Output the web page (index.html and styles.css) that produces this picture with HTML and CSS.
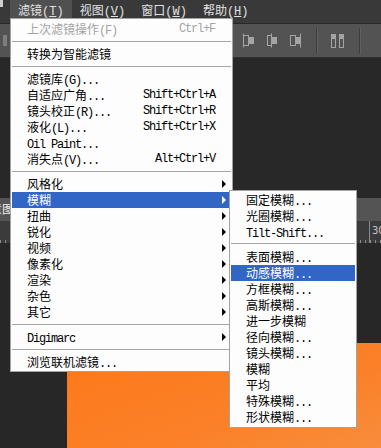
FILE: index.html
```html
<!DOCTYPE html>
<html lang="zh-CN">

<head>
    <meta charset="UTF-8">
    <title>滤镜菜单</title>
    <link rel="stylesheet" href="styles.css">
</head>

<body>
    <div class="app">
        <div class="menubar">
            <span class="ps-logo"></span>
            <span class="mb-item active">滤镜<span class="m">(<u>T</u>)</span></span>
            <span class="mb-item">视图<span class="m">(<u>V</u>)</span></span>
            <span class="mb-item">窗口<span class="m">(<u>W</u>)</span></span>
            <span class="mb-item">帮助<span class="m">(<u>H</u>)</span></span>
        </div>

        <div class="toolbar">
            <span class="grip"></span>
            <div class="tool-group">
                <svg class="tool" width="14" height="15" viewBox="0 0 14 15">
                    <path d="M1.5 0.5v14" stroke="#a4a4a4" />
                    <rect x="1.5" y="2.5" width="5" height="10" fill="none" stroke="#a4a4a4" />
                    <rect x="7" y="4" width="5" height="7" fill="#a4a4a4" />
                </svg>
                <svg class="tool" width="14" height="15" viewBox="0 0 14 15">
                    <path d="M6.5 0.5v14" stroke="#a4a4a4" />
                    <rect x="2.5" y="2.5" width="4" height="10" fill="none" stroke="#a4a4a4" />
                    <rect x="7" y="4" width="5" height="7" fill="#a4a4a4" />
                </svg>
                <svg class="tool" width="14" height="15" viewBox="0 0 14 15">
                    <path d="M12.5 0.5v14" stroke="#a4a4a4" />
                    <rect x="2.5" y="2.5" width="5" height="10" fill="none" stroke="#a4a4a4" />
                    <rect x="8" y="4" width="4" height="7" fill="#a4a4a4" />
                </svg>
            </div>
            <span class="tool-sep"></span>
            <svg class="tool" width="15" height="15" viewBox="0 0 15 15">
                <rect x="1" y="1" width="5" height="4" fill="#a4a4a4" />
                <rect x="9" y="1" width="5" height="4" fill="#a4a4a4" />
                <rect x="1.5" y="5.5" width="4" height="9" fill="none" stroke="#a4a4a4" />
                <rect x="9.5" y="5.5" width="4" height="9" fill="none" stroke="#a4a4a4" />
            </svg>
            <span class="tool-sep"></span>
        </div>

        <div class="panel-space"></div>

        <div class="document">
            <div class="tabbar">
                <span class="tab">示意图</span>
            </div>
            <div class="ruler">
                <span class="ruler-num">30</span>
            </div>
            <div class="stage">
                <div class="canvas"></div>
            </div>
        </div>

        <!-- 主菜单：滤镜 -->
        <div class="menu menu-main">
            <div class="item disabled"><span class="label">上次滤镜操作<span class="m">(F)</span></span><span class="key">Ctrl+F</span><span class="arrow"></span></div>
            <div class="sep"></div>
            <div class="item"><span class="label">转换为智能滤镜</span><span class="arrow"></span></div>
            <div class="sep"></div>
            <div class="item"><span class="label">滤镜库<span class="m">(G)...</span></span><span class="arrow"></span></div>
            <div class="item"><span class="label">自适应广角<span class="m">...</span></span><span class="key">Shift+Ctrl+A</span><span class="arrow"></span></div>
            <div class="item"><span class="label">镜头校正<span class="m">(R)...</span></span><span class="key">Shift+Ctrl+R</span><span class="arrow"></span></div>
            <div class="item"><span class="label">液化<span class="m">(L)...</span></span><span class="key">Shift+Ctrl+X</span><span class="arrow"></span></div>
            <div class="item"><span class="label"><span class="m">Oil Paint...</span></span><span class="arrow"></span></div>
            <div class="item"><span class="label">消失点<span class="m">(V)...</span></span><span class="key">Alt+Ctrl+V</span><span class="arrow"></span></div>
            <div class="sep"></div>
            <div class="item has-sub"><span class="label">风格化</span><span class="arrow"></span></div>
            <div class="item has-sub active"><span class="label">模糊</span><span class="arrow"></span></div>
            <div class="item has-sub"><span class="label">扭曲</span><span class="arrow"></span></div>
            <div class="item has-sub"><span class="label">锐化</span><span class="arrow"></span></div>
            <div class="item has-sub"><span class="label">视频</span><span class="arrow"></span></div>
            <div class="item has-sub"><span class="label">像素化</span><span class="arrow"></span></div>
            <div class="item has-sub"><span class="label">渲染</span><span class="arrow"></span></div>
            <div class="item has-sub"><span class="label">杂色</span><span class="arrow"></span></div>
            <div class="item has-sub"><span class="label">其它</span><span class="arrow"></span></div>
            <div class="sep"></div>
            <div class="item has-sub"><span class="label"><span class="m">Digimarc</span></span><span class="arrow"></span></div>
            <div class="sep"></div>
            <div class="item"><span class="label">浏览联机滤镜<span class="m">...</span></span><span class="arrow"></span></div>
        </div>

        <!-- 子菜单：模糊 -->
        <div class="menu menu-sub">
            <div class="item"><span class="label">固定模糊<span class="m">...</span></span></div>
            <div class="item"><span class="label">光圈模糊<span class="m">...</span></span></div>
            <div class="item"><span class="label"><span class="m">Tilt-Shift...</span></span></div>
            <div class="sep"></div>
            <div class="item"><span class="label">表面模糊<span class="m">...</span></span></div>
            <div class="item active"><span class="label">动感模糊<span class="m">...</span></span></div>
            <div class="item"><span class="label">方框模糊<span class="m">...</span></span></div>
            <div class="item"><span class="label">高斯模糊<span class="m">...</span></span></div>
            <div class="item"><span class="label">进一步模糊</span></div>
            <div class="item"><span class="label">径向模糊<span class="m">...</span></span></div>
            <div class="item"><span class="label">镜头模糊<span class="m">...</span></span></div>
            <div class="item"><span class="label">模糊</span></div>
            <div class="item"><span class="label">平均</span></div>
            <div class="item"><span class="label">特殊模糊<span class="m">...</span></span></div>
            <div class="item"><span class="label">形状模糊<span class="m">...</span></span></div>
        </div>
    </div>
</body>

</html>
```

FILE: styles.css
```css
body {
    margin: 0;
    background-color: #282828;
    font-family: "Noto Sans CJK SC", "Liberation Sans", sans-serif;
}

.app {
    position: relative;
    width: 381px;
    height: 448px;
    overflow: hidden;
    background-color: #282828;
}

.m {
    font-family: "Liberation Mono", "Noto Sans CJK SC", monospace;
    font-size: 12px;
    letter-spacing: -1.2px;
}

/* Menu bar */
.menubar {
    display: flex;
    height: 24px;
    box-sizing: border-box;
    background-color: #393939;
    border-bottom: 1px solid #272727;
}

.ps-logo {
    width: 10px;
    position: relative;
}

.ps-logo::before {
    content: "";
    display: block;
    width: 3px;
    height: 7px;
    background-color: #cfcfcf;
}

.mb-item {
    height: 20px;
    line-height: 20px;
    padding: 0 8px;
    color: #e2e2e2;
    font-size: 12px;
    white-space: nowrap;
}

.mb-item .m {
    font-size: 12px;
    letter-spacing: 0;
}

.mb-item.active {
    background-color: #505050;
}

/* Options bar */
.toolbar {
    display: flex;
    align-items: center;
    height: 34px;
    box-sizing: border-box;
    padding-left: 3px;
    background-color: #535353;
    border-bottom: 1px solid #2f2f2f;
}

.grip {
    width: 4px;
    height: 11px;
    background-color: #7d7d7d;
}

.tool-group {
    display: flex;
    gap: 9px;
    margin-left: 235px;
}

.tool {
    display: block;
}

.tool-sep {
    width: 1px;
    height: 26px;
    margin: 0 13px 0 14px;
    background-color: #3e3e3e;
    box-shadow: 1px 0 0 #606060;
}

.panel-space {
    height: 140px;
}

/* Document window */
.tabbar {
    height: 23px;
    background-color: #545454;
    display: flex;
}

.tab {
    margin-left: -22px;
    line-height: 20px;
    padding-top: 1px;
    color: #f0f0f0;
    font-size: 12px;
}

.ruler {
    position: relative;
    height: 22px;
    background-color: #3b3b3b;
    background-image: repeating-linear-gradient(90deg, #8a8a8a 0 1px, transparent 1px 5px);
    background-size: 100% 3px;
    background-position: 0 bottom;
    background-repeat: no-repeat;
}

.ruler-num {
    position: absolute;
    left: 369px;
    top: 0;
    height: 22px;
    padding: 4px 0 0 2px;
    box-sizing: border-box;
    border-left: 1px solid #8a8a8a;
    color: #c4c4c4;
    font-family: "DejaVu Sans", sans-serif;
    font-size: 10px;
}

.stage {
    height: 205px;
    padding: 100px 0 0 67px;
    box-sizing: border-box;
    background-color: #272727;
}

.canvas {
    height: 100%;
    background: linear-gradient(160deg, #fd7818 0%, #fb8027 60%, #f88d3c 100%);
}

/* Drop-down menus */
.menu {
    position: absolute;
    background-color: #fdfdfd;
    border: 1px solid #a3a3a3;
    box-sizing: border-box;
}

.menu-main {
    left: 10px;
    top: 18px;
    width: 223px;
    padding: 2px 0 1px;
}

.menu-sub {
    left: 229px;
    top: 190px;
    width: 128px;
    padding: 1px 0 2px;
}

.item {
    display: flex;
    height: 16px;
    line-height: 16px;
    margin: 0 1px;
    padding-left: 15px;
    color: #000;
    font-size: 12px;
    white-space: nowrap;
}

.item .label {
    flex: 1;
}

.item .key {
    font-family: "Liberation Mono", monospace;
    font-size: 12px;
    letter-spacing: -1.2px;
}

.item .arrow {
    width: 16px;
}

.item.has-sub .arrow::after {
    content: "";
    display: block;
    width: 0;
    height: 0;
    margin: 4px 0 0 7px;
    border-left: 4px solid #000;
    border-top: 4px solid transparent;
    border-bottom: 4px solid transparent;
}

.item.active {
    background-color: #3165c6;
    color: #fff;
}

.item.active .arrow::after {
    border-left-color: #fff;
}

.item.disabled {
    color: #a4a4a4;
}

.sep {
    height: 9px;
    margin: 0 1px;
    background: linear-gradient(#a6a6a6, #a6a6a6) 0 4px / 100% 1px no-repeat;
}

.menu-sub .sep {
    background-position: 0 3px;
}
```
